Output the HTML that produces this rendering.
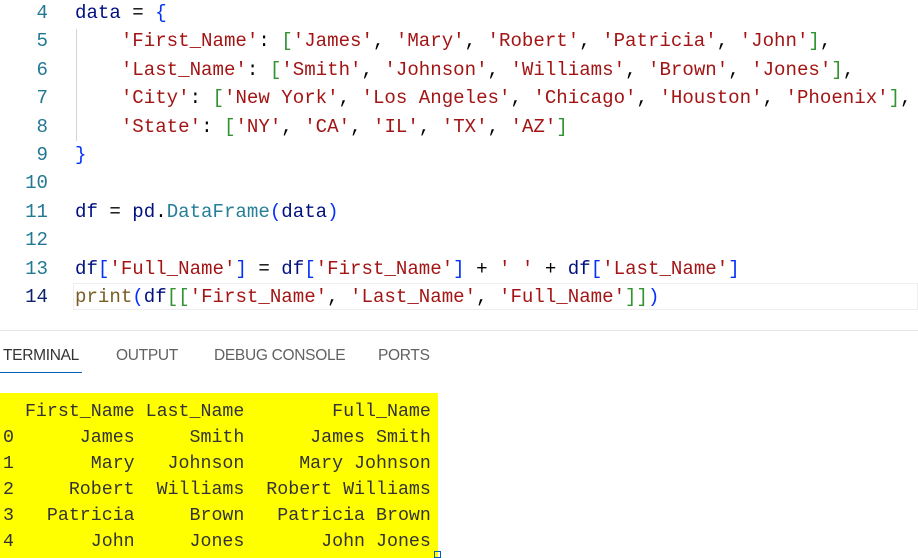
<!DOCTYPE html>
<html><head><meta charset="utf-8"><style>
body{margin:0;width:918px;height:558px;background:#fff;overflow:hidden;position:relative;font-family:"Liberation Mono",monospace}
.ln{position:absolute;left:0;width:48px;text-align:right;color:#237893;font-size:19.1px;line-height:28.4px}
.code{position:absolute;left:75px;font-size:19.1px;line-height:28.4px;white-space:pre;color:#000}
.s{color:#a31515}.v{color:#001080}.b{color:#0431fa}.g{color:#319331}.f{color:#795e26}.t{color:#267f99}
.cur{position:absolute;left:73px;top:283px;width:845px;height:27px;border:1px solid #eeeeee;box-sizing:border-box}
.guide{position:absolute;left:76px;top:29px;width:1px;height:112px;background:#d3d3d3}
.sep{position:absolute;left:0;top:330px;width:918px;height:1px;background:#e5e5e5}
.tab{position:absolute;top:347px;font-family:"Liberation Sans",sans-serif;font-size:15.5px;color:#616161;letter-spacing:-0.3px}
.term{position:absolute;left:0;top:393px;width:438px;height:165px;background:#ffff00}
.tl{position:absolute;left:3px;top:399px;font-size:18.3px;line-height:26px;white-space:pre;color:#333}
</style></head><body>
<div class="cur"></div>
<div class="guide"></div>
<div class="ln" style="top:-1px;height:320px">4<br>5<br>6<br>7<br>8<br>9<br>10<br>11<br>12<br>13<br><span style="color:#0b216f">14</span></div>
<div class="code" style="top:-1px"><span class="v">data</span> = <span class="b">{</span>
    <span class="s">'First_Name'</span>: <span class="g">[</span><span class="s">'James'</span>, <span class="s">'Mary'</span>, <span class="s">'Robert'</span>, <span class="s">'Patricia'</span>, <span class="s">'John'</span><span class="g">]</span>,
    <span class="s">'Last_Name'</span>: <span class="g">[</span><span class="s">'Smith'</span>, <span class="s">'Johnson'</span>, <span class="s">'Williams'</span>, <span class="s">'Brown'</span>, <span class="s">'Jones'</span><span class="g">]</span>,
    <span class="s">'City'</span>: <span class="g">[</span><span class="s">'New York'</span>, <span class="s">'Los Angeles'</span>, <span class="s">'Chicago'</span>, <span class="s">'Houston'</span>, <span class="s">'Phoenix'</span><span class="g">]</span>,
    <span class="s">'State'</span>: <span class="g">[</span><span class="s">'NY'</span>, <span class="s">'CA'</span>, <span class="s">'IL'</span>, <span class="s">'TX'</span>, <span class="s">'AZ'</span><span class="g">]</span>
<span class="b">}</span>

<span class="v">df</span> = <span class="v">pd</span>.<span class="t">DataFrame</span><span class="b">(</span><span class="v">data</span><span class="b">)</span>

<span class="v">df</span><span class="b">[</span><span class="s">'Full_Name'</span><span class="b">]</span> = <span class="v">df</span><span class="b">[</span><span class="s">'First_Name'</span><span class="b">]</span> + <span class="s">' '</span> + <span class="v">df</span><span class="b">[</span><span class="s">'Last_Name'</span><span class="b">]</span>
<span class="f">print</span><span class="b">(</span><span class="v">df</span><span class="g">[[</span><span class="s">'First_Name'</span>, <span class="s">'Last_Name'</span>, <span class="s">'Full_Name'</span><span class="g">]]</span><span class="b">)</span></div>
<div class="sep"></div>
<div class="tab" style="left:3px;color:#333">TERMINAL</div>
<div style="position:absolute;left:0;top:372px;width:82px;height:1px;background:#005fb8"></div>
<div class="tab" style="left:116px">OUTPUT</div>
<div class="tab" style="left:214px">DEBUG CONSOLE</div>
<div class="tab" style="left:378px">PORTS</div>
<div class="term"></div>
<div class="tl">  First_Name Last_Name        Full_Name
0      James     Smith      James Smith
1       Mary   Johnson     Mary Johnson
2     Robert  Williams  Robert Williams
3   Patricia     Brown   Patricia Brown
4       John     Jones       John Jones</div>
<div style="position:absolute;left:434px;top:551px;width:7px;height:7px;border:1px solid #005fb8;box-sizing:border-box"></div>
</body></html>
